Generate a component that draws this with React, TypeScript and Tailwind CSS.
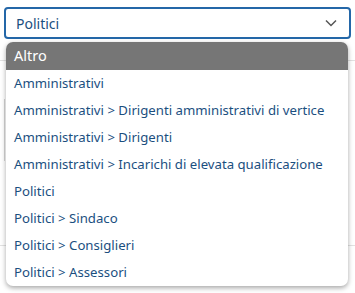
import React from "react"

const options = [
    "Amministrativi",
    "Amministrativi > Dirigenti amministrativi di vertice",
    "Amministrativi > Dirigenti",
    "Amministrativi > Incarichi di elevata qualificazione",
    "Politici",
    "Politici > Sindaco",
    "Politici > Consiglieri",
    "Politici > Assessori",
]

const App = () => {
    return (
        <div
            className="relative w-[355px] h-[293px] bg-white overflow-hidden"
            style={{ fontFamily: "'Noto Sans', 'Open Sans', sans-serif" }}
        >
            {/* page content behind the menu */}
            <div className="pt-[7px] px-[4px]">
                <div className="h-[32px] border-2 border-[#2467a8] rounded-[4px] flex items-center justify-between pl-[10px] pr-[12px]">
                    <span className="text-[14px] text-[#1b4f7f]">Politici</span>
                    <svg width="12" height="8" viewBox="0 0 12 8" fill="none">
                        <path d="M1 1.5l5 5 5-5" stroke="#555" strokeWidth="1.5" />
                    </svg>
                </div>
            </div>
            <div className="mt-[21px] border-t border-[#e2e2e2]" />
            <div className="mt-[38px] ml-[4px] h-[62px] w-[20px] border-l border-[#d5d5d5]" />
            <div className="mt-[84px] border-t border-[#e2e2e2]" />

            {/* open menu */}
            <div className="absolute left-[6px] top-[42px] w-[342px] bg-white rounded-[7px] shadow-[0_2px_5px_rgba(0,0,0,0.35)] overflow-hidden">
                <div className="h-[28px] bg-[#767676] text-white text-[14.5px] flex items-center pl-[8px]">
                    Altro
                </div>
                {options.map((o) => (
                    <div
                        key={o}
                        className="h-[27px] flex items-center pl-[8px] text-[13.2px] text-[#1b4f7f] whitespace-nowrap"
                    >
                        {o}
                    </div>
                ))}
            </div>
        </div>
    )
}

export default App
